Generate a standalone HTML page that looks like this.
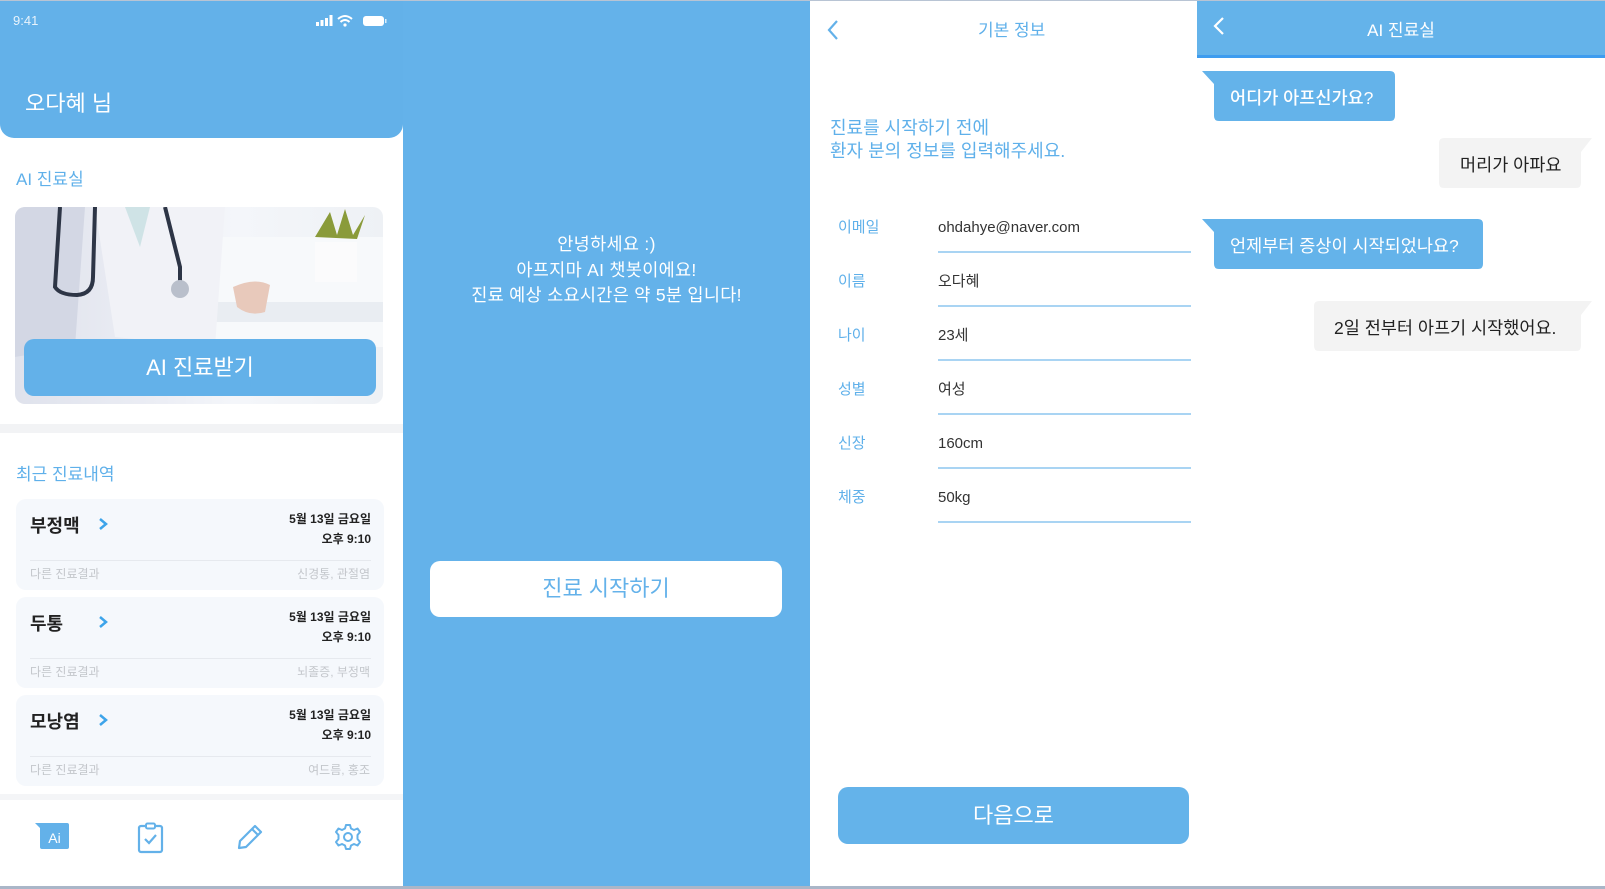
<!DOCTYPE html>
<html><head><meta charset="utf-8">
<style>
*{margin:0;padding:0;box-sizing:border-box}
body{width:1605px;height:889px;position:relative;overflow:hidden;background:#fff;font-family:"Liberation Sans","Noto Sans CJK KR",sans-serif}
.a{position:absolute}
.blue{color:#5fb0ea}
.t{white-space:nowrap}
</style></head><body>
<div class="a" style="left:0;top:0;width:1605px;height:1px;background:#b8c4d4"></div>

<!-- Panel 1 -->
<div class="a" style="left:0;top:1px;width:403px;height:137px;background:#63b1e9;border-radius:0 0 14px 14px"></div>
<div class="a t" style="left:13px;top:13px;color:#e8f3fc;font-size:13px">9:41</div>
<svg class="a" style="left:316px;top:14px" width="72" height="14" viewBox="0 0 72 14">
<rect x="0" y="8" width="3" height="4" fill="#fff"/><rect x="4.5" y="6" width="3" height="6" fill="#fff"/><rect x="9" y="4" width="3" height="8" fill="#fff"/><rect x="13.5" y="1" width="3" height="11" fill="#fff"/>
<path d="M22 5 Q29 -1 36 5" stroke="#fff" stroke-width="2" fill="none"/><path d="M24.5 8 Q29 4 33.5 8" stroke="#fff" stroke-width="2" fill="none"/><circle cx="29" cy="11" r="1.6" fill="#fff"/>
<rect x="47" y="2" width="21" height="10" rx="3" fill="#fff"/><rect x="69" y="5" width="1.5" height="4" fill="#dbeefc"/>
</svg>
<div class="a t" style="left:25px;top:86px;color:#fff;font-size:22px">오다혜 님</div>
<div class="a t blue" style="left:16px;top:165px;font-size:17px">AI 진료실</div>
<div class="a" style="left:15px;top:207px;width:368px;height:197px;border-radius:10px;overflow:hidden;background:linear-gradient(90deg,#dfe2ec 0%,#eceef5 40%,#f4f6fa 60%,#eef1f5 100%)">
<svg width="368" height="197" viewBox="0 0 368 197">
<rect x="195" y="30" width="173" height="110" fill="#f7f9fb"/>
<rect x="175" y="95" width="193" height="20" fill="#e9edf2"/>
<path d="M0 0 L0 150 L60 140 L70 0Z" fill="#d3d7e4"/>
<path d="M80 0 L100 130 L200 140 L210 0Z" fill="#f1f2f7"/>
<path d="M110 0 L125 40 L135 0Z" fill="#cfe3e6"/>
<path d="M45 0 L40 80 Q45 88 62 88 Q78 87 78 70 L80 0" stroke="#2d3546" stroke-width="4" fill="none"/>
<path d="M150 0 L165 60 L165 80" stroke="#2d3546" stroke-width="4" fill="none"/>
<circle cx="165" cy="82" r="9" fill="#b9bfcb"/>
<path d="M218 80 Q240 70 255 78 L250 105 Q235 110 222 100Z" fill="#e8c9bb"/>
<rect x="300" y="35" width="42" height="40" fill="#fbfbfc"/>
<path d="M300 30 L315 5 L322 28 L330 2 L338 28 L350 8 L342 32Z" fill="#8a9b3a"/>
</svg>
</div>
<div class="a" style="left:24px;top:339px;width:352px;height:57px;background:#63b1e9;border-radius:10px;color:#fff;font-size:22px;text-align:center;line-height:57px">AI 진료받기</div>
<div class="a" style="left:0;top:424px;width:403px;height:9px;background:#f2f3f5"></div>
<div class="a t blue" style="left:16px;top:460px;font-size:17px">최근 진료내역</div>

<div class="a" style="left:16px;top:499px;width:368px;height:91px;background:#f5f8fc;border-radius:10px"></div>
<div class="a" style="left:16px;top:597px;width:368px;height:91px;background:#f5f8fc;border-radius:10px"></div>
<div class="a" style="left:16px;top:695px;width:368px;height:91px;background:#f5f8fc;border-radius:10px"></div>
<div class="a t" style="left:30px;top:512px;font-size:18px;font-weight:bold;color:#222">부정맥</div>
<div class="a t" style="left:30px;top:610px;font-size:18px;font-weight:bold;color:#222">두통</div>
<div class="a t" style="left:30px;top:708px;font-size:18px;font-weight:bold;color:#222">모낭염</div>
<svg class="a" style="left:98px;top:517px" width="10" height="14"><path d="M2 2 L8 7 L2 12" stroke="#3da4ea" stroke-width="2.5" fill="none"/></svg>
<svg class="a" style="left:98px;top:615px" width="10" height="14"><path d="M2 2 L8 7 L2 12" stroke="#3da4ea" stroke-width="2.5" fill="none"/></svg>
<svg class="a" style="left:98px;top:713px" width="10" height="14"><path d="M2 2 L8 7 L2 12" stroke="#3da4ea" stroke-width="2.5" fill="none"/></svg>
<div class="a t" style="right:1234px;top:509px;font-size:12px;font-weight:bold;color:#222;text-align:right;line-height:20px">5월 13일 금요일<br>오후 9:10</div>
<div class="a t" style="right:1234px;top:607px;font-size:12px;font-weight:bold;color:#222;text-align:right;line-height:20px">5월 13일 금요일<br>오후 9:10</div>
<div class="a t" style="right:1234px;top:705px;font-size:12px;font-weight:bold;color:#222;text-align:right;line-height:20px">5월 13일 금요일<br>오후 9:10</div>
<div class="a" style="left:30px;top:560px;width:341px;height:1px;background:#e6e9ee"></div>
<div class="a" style="left:30px;top:658px;width:341px;height:1px;background:#e6e9ee"></div>
<div class="a" style="left:30px;top:756px;width:341px;height:1px;background:#e6e9ee"></div>
<div class="a t" style="left:30px;top:565px;font-size:12px;color:#c3c6cb">다른 진료결과</div>
<div class="a t" style="left:30px;top:663px;font-size:12px;color:#c3c6cb">다른 진료결과</div>
<div class="a t" style="left:30px;top:761px;font-size:12px;color:#c3c6cb">다른 진료결과</div>
<div class="a t" style="right:1235px;top:565px;font-size:12px;color:#c3c6cb">신경통, 관절염</div>
<div class="a t" style="right:1235px;top:663px;font-size:12px;color:#c3c6cb">뇌졸증, 부정맥</div>
<div class="a t" style="right:1235px;top:761px;font-size:12px;color:#c3c6cb">여드름, 홍조</div>
<div class="a" style="left:0;top:794px;width:403px;height:6px;background:#f4f5f7"></div>
<svg class="a" style="left:34px;top:822px" width="36" height="30" viewBox="0 0 36 30"><path d="M1 1 L33 1 Q35 1 35 3 L35 25 Q35 27 33 27 L8 27 Q6 27 6 25 L6 6Z" fill="#63b1e9"/><text x="20.5" y="21" font-size="14" fill="#fff" text-anchor="middle" font-family="Liberation Sans">Ai</text></svg>
<svg class="a" style="left:137px;top:822px" width="28" height="32" viewBox="0 0 28 32"><rect x="2" y="4" width="23" height="26" rx="2" stroke="#63b1e9" stroke-width="2.2" fill="none"/><rect x="9" y="1.5" width="9" height="5" rx="1.5" stroke="#63b1e9" stroke-width="2" fill="#fff"/><path d="M8 17 L12 21 L19 13" stroke="#63b1e9" stroke-width="2.2" fill="none"/></svg>
<svg class="a" style="left:236px;top:823px" width="28" height="28" viewBox="0 0 28 28"><path d="M3 25 L4 18 L19 3 L25 9 L10 24Z M16 6 L22 12" stroke="#63b1e9" stroke-width="2.2" fill="none" stroke-linejoin="round"/></svg>
<svg class="a" style="left:334px;top:823px" width="28" height="28" viewBox="0 0 28 28"><path d="M12 2 L16 2 L17 5.5 L20 7 L23.5 5.5 L26 9 L23.5 12 L23.5 16 L26 19 L23.5 22.5 L20 21 L17 22.5 L16 26 L12 26 L11 22.5 L8 21 L4.5 22.5 L2 19 L4.5 16 L4.5 12 L2 9 L4.5 5.5 L8 7 L11 5.5Z" stroke="#63b1e9" stroke-width="2" fill="none" stroke-linejoin="round"/><circle cx="14" cy="14" r="4" stroke="#63b1e9" stroke-width="2" fill="none"/></svg>

<!-- Panel 2 -->
<div class="a" style="left:403px;top:1px;width:407px;height:886px;background:#64b2ea"></div>
<div class="a" style="left:403px;top:232px;width:407px;text-align:center;color:#fff;font-size:17.5px;line-height:25.5px;letter-spacing:0.3px">안녕하세요 :)<br>아프지마 AI 챗봇이에요!<br>진료 예상 소요시간은 약 5분 입니다!</div>
<div class="a" style="left:430px;top:561px;width:352px;height:56px;background:#fff;border-radius:10px;color:#64b2ea;font-size:22px;text-align:center;line-height:56px">진료 시작하기</div>

<!-- Panel 3 -->
<svg class="a" style="left:826px;top:19px" width="14" height="22"><path d="M11 2 L3 11 L11 20" stroke="#63b1e9" stroke-width="2.2" fill="none"/></svg>
<div class="a t blue" style="left:978px;top:16px;font-size:17px">기본 정보</div>
<div class="a t blue" style="left:830px;top:117px;font-size:18px;line-height:23px">진료를 시작하기 전에<br>환자 분의 정보를 입력해주세요.</div>
<div class="a t blue" style="left:838px;top:218px;font-size:15px;line-height:20px">이메일</div>
<div class="a t blue" style="left:838px;top:272px;font-size:15px;line-height:20px">이름</div>
<div class="a t blue" style="left:838px;top:326px;font-size:15px;line-height:20px">나이</div>
<div class="a t blue" style="left:838px;top:380px;font-size:15px;line-height:20px">성별</div>
<div class="a t blue" style="left:838px;top:434px;font-size:15px;line-height:20px">신장</div>
<div class="a t blue" style="left:838px;top:488px;font-size:15px;line-height:20px">체중</div>
<div class="a t" style="left:938px;top:218px;font-size:15px;line-height:20px;color:#333">ohdahye@naver.com</div>
<div class="a t" style="left:938px;top:272px;font-size:15px;line-height:20px;color:#333">오다혜</div>
<div class="a t" style="left:938px;top:326px;font-size:15px;line-height:20px;color:#333">23세</div>
<div class="a t" style="left:938px;top:380px;font-size:15px;line-height:20px;color:#333">여성</div>
<div class="a t" style="left:938px;top:434px;font-size:15px;line-height:20px;color:#333">160cm</div>
<div class="a t" style="left:938px;top:488px;font-size:15px;line-height:20px;color:#333">50kg</div>
<div class="a" style="left:938px;top:251px;width:253px;height:2px;background:#a9d4f3"></div>
<div class="a" style="left:938px;top:305px;width:253px;height:2px;background:#a9d4f3"></div>
<div class="a" style="left:938px;top:359px;width:253px;height:2px;background:#a9d4f3"></div>
<div class="a" style="left:938px;top:413px;width:253px;height:2px;background:#a9d4f3"></div>
<div class="a" style="left:938px;top:467px;width:253px;height:2px;background:#a9d4f3"></div>
<div class="a" style="left:938px;top:521px;width:253px;height:2px;background:#a9d4f3"></div>
<div class="a" style="left:838px;top:787px;width:351px;height:57px;background:#64b3ea;border-radius:10px;color:#fff;font-size:22px;text-align:center;line-height:57px">다음으로</div>

<!-- Panel 4 -->
<div class="a" style="left:1197px;top:1px;width:408px;height:54px;background:#64b3ea"></div>
<div class="a" style="left:1197px;top:55px;width:408px;height:3px;background:#3e9cef"></div>
<svg class="a" style="left:1212px;top:16px" width="14" height="22"><path d="M11 2 L3 10 L11 18" stroke="#fff" stroke-width="2.2" fill="none"/></svg>
<div class="a t" style="left:1197px;top:16px;width:408px;text-align:center;color:#fff;font-size:17px">AI 진료실</div>

<svg class="a" style="left:1202px;top:70px" width="195" height="56"><path d="M0 1 L188 1 Q193 1 193 6 L193 46 Q193 51 188 51 L17 51 Q12 51 12 46 L12 14Z" fill="#64b3ea"/></svg>
<div class="a t" style="left:1230px;top:85px;color:#fff;font-size:17.5px;font-weight:500">어디가 아프신가요?</div>
<svg class="a" style="left:1438px;top:137px" width="156" height="56"><path d="M1 6 Q1 1 6 1 L154 1 L143 15 L143 46 Q143 51 138 51 L6 51 Q1 51 1 46Z" fill="#f3f3f3"/></svg>
<div class="a t" style="left:1460px;top:152px;color:#222;font-size:17.5px">머리가 아파요</div>
<svg class="a" style="left:1202px;top:218px" width="285" height="56"><path d="M0 1 L276 1 Q281 1 281 6 L281 46 Q281 51 276 51 L17 51 Q12 51 12 46 L12 14Z" fill="#64b3ea"/></svg>
<div class="a t" style="left:1230px;top:233px;color:#fff;font-size:17.5px">언제부터 증상이 시작되었나요?</div>
<svg class="a" style="left:1313px;top:300px" width="281" height="56"><path d="M1 6 Q1 1 6 1 L279 1 L268 15 L268 46 Q268 51 263 51 L6 51 Q1 51 1 46Z" fill="#f3f3f3"/></svg>
<div class="a t" style="left:1334px;top:315px;color:#222;font-size:17.5px">2일 전부터 아프기 시작했어요.</div>

<div class="a" style="left:0;top:886px;width:1605px;height:3px;background:#aab6c8"></div>
</body></html>
